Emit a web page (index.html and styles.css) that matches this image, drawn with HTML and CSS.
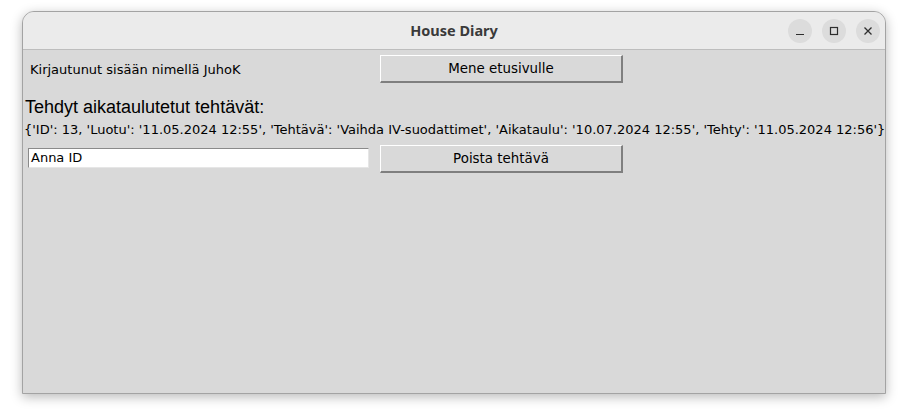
FILE: index.html
```html
<!DOCTYPE html>
<html>
<head>
<meta charset="utf-8">
<link rel="stylesheet" href="styles.css">
</head>
<body>
<div class="window">
  <div class="titlebar">
    <div class="title">House Diary</div>
    <div class="controls">
      <div class="ctl"><svg width="24" height="24" viewBox="0 0 24 24"><path d="M8 15.5h8" stroke="#2e2e2e" stroke-width="1.2"/></svg></div>
      <div class="ctl"><svg width="24" height="24" viewBox="0 0 24 24"><rect x="8.5" y="8.5" width="7" height="7" fill="none" stroke="#2e2e2e" stroke-width="1.2"/></svg></div>
      <div class="ctl"><svg width="24" height="24" viewBox="0 0 24 24"><path d="M8.5 8.5l7 7M15.5 8.5l-7 7" stroke="#2e2e2e" stroke-width="1.3"/></svg></div>
    </div>
  </div>
  <div class="content">
    <div class="row row-top">
      <div class="cell-left"><span class="label">Kirjautunut sisään nimellä JuhoK</span></div>
      <button class="tkbtn">Mene etusivulle</button>
    </div>
    <div class="heading">Tehdyt aikataulutetut tehtävät:</div>
    <div class="record">{'ID': 13, 'Luotu': '11.05.2024 12:55', 'Tehtävä': 'Vaihda IV-suodattimet', 'Aikataulu': '10.07.2024 12:55', 'Tehty': '11.05.2024 12:56'}</div>
    <div class="row row-entry">
      <div class="cell-left"><div class="entry">Anna ID</div></div>
      <button class="tkbtn">Poista tehtävä</button>
    </div>
  </div>
</div>
</body>
</html>
```

FILE: styles.css
```css
html, body {
  margin: 0;
  padding: 0;
  background: #ffffff;
}
body {
  width: 912px;
  height: 420px;
  padding: 11px 0 0 22px;
  box-sizing: border-box;
}
.window {
  width: 864px;
  height: 383px;
  box-sizing: border-box;
  border: 1px solid #a3a3a3;
  border-radius: 12px 12px 0 0;
  background: #d9d9d9;
  box-shadow: 0 3px 12px rgba(0,0,0,0.28);
  overflow: hidden;
  display: flex;
  flex-direction: column;
}
.titlebar {
  height: 37px;
  background: #ebebeb;
  border-bottom: 1px solid #bdbdbd;
  position: relative;
  flex: none;
}
.title {
  text-align: center;
  font-family: "Noto Sans", "DejaVu Sans", sans-serif;
  font-weight: bold;
  font-size: 14.5px;
  line-height: 37px;
  color: #3a3a3a;
}
.controls {
  position: absolute;
  right: 5px;
  top: 7px;
  display: flex;
  gap: 10px;
}
.ctl {
  width: 24px;
  height: 24px;
  border-radius: 50%;
  background: #dcdcdc;
}
.ctl svg { display: block; }
.content {
  flex: 1;
  font-family: "DejaVu Sans", sans-serif;
  color: #000;
}
.row {
  display: flex;
  align-items: center;
}
.row-top {
  margin-top: 5px;
  height: 28px;
}
.cell-left {
  width: 357px;
  flex: none;
}
.label {
  display: block;
  padding-left: 7px;
  font-size: 13px;
}
.tkbtn {
  width: 243px;
  height: 28px;
  margin: 0;
  padding: 0;
  background: #d9d9d9;
  border: 1px solid;
  border-color: #ffffff #7f7f7f #7f7f7f #ffffff;
  border-width: 1px 2px 2px 1px;
  font-family: "DejaVu Sans", sans-serif;
  font-size: 13.4px;
  color: #000;
}
.heading {
  margin-top: 14px;
  padding-left: 2px;
  font-family: "Liberation Sans", sans-serif;
  font-size: 18px;
  line-height: 21px;
}
.record {
  margin-top: 3px;
  padding-left: 1px;
  font-size: 13px;
  line-height: 17px;
  white-space: nowrap;
}
.row-entry {
  margin-top: 7px;
  height: 28px;
  align-items: flex-start;
}
.entry {
  margin-top: 3px;
  margin-left: 5px;
  width: 341px;
  height: 20px;
  box-sizing: border-box;
  background: #fff;
  border: 1px solid;
  border-color: #8a8a8a #e6e6e6 #e6e6e6 #8a8a8a;
  font-size: 13px;
  line-height: 18px;
  padding-left: 2px;
}
```
